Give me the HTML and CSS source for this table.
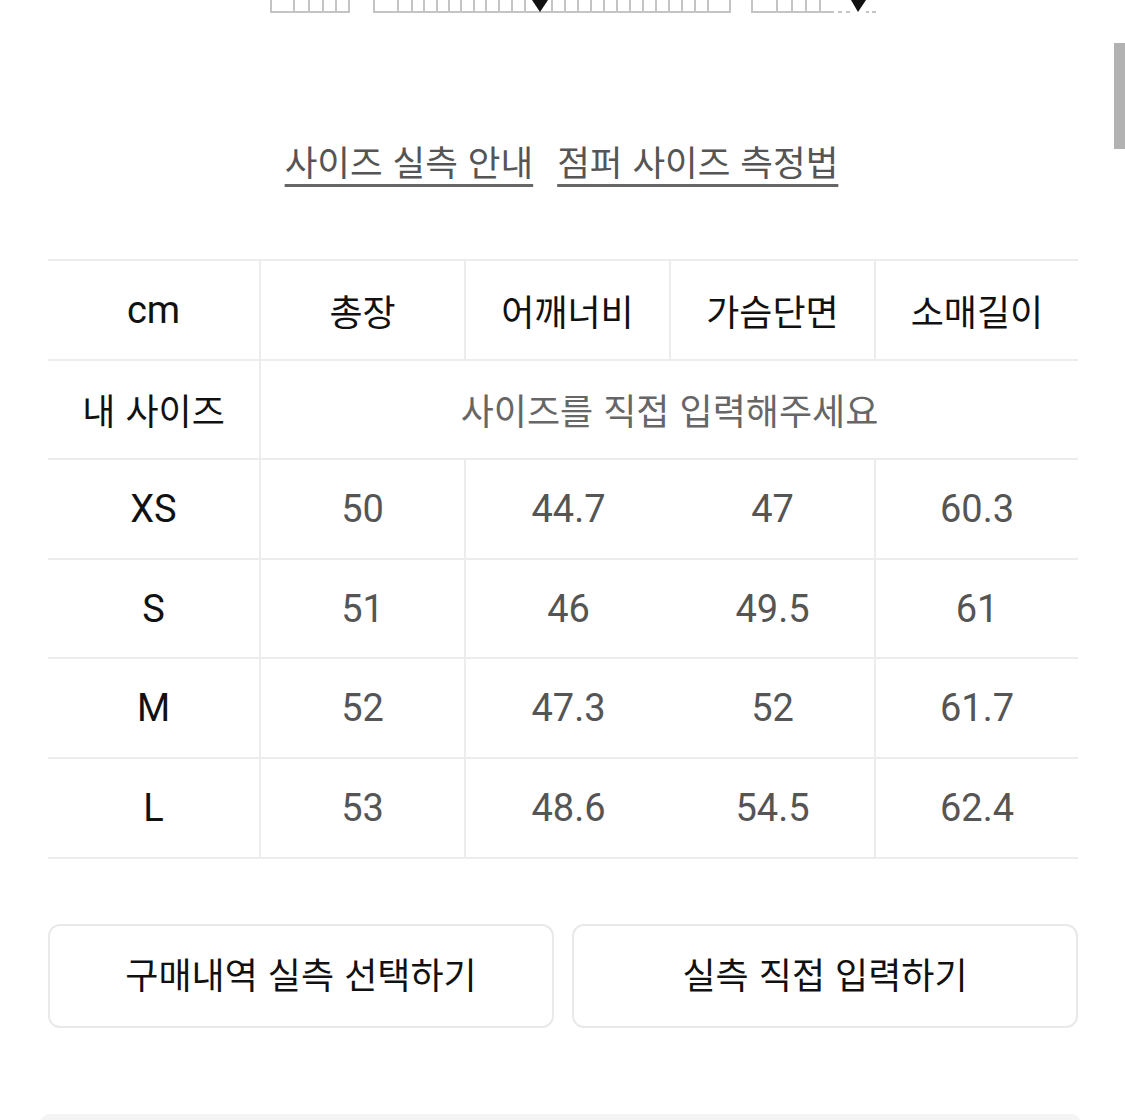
FILE: index.html
```html
<!DOCTYPE html>
<html lang="ko">
<head>
<meta charset="utf-8">
<link rel="stylesheet" href="styles.css">
</head>
<body>
<div class="page">
  <div class="ruler-strip">
    <svg width="1125" height="16" viewBox="0 0 1125 16">
      <g fill="none" stroke="#c4c4c4" stroke-width="2">
        <path d="M271 0 V12 H349 V0"/>
        <path d="M294 0 V12 M309 0 V12 M323 0 V12 M336 0 V12"/>
        <path d="M374 0 V12 H730 V0"/>
        <path d="M398 0 V12 M412 0 V12 M424 0 V12 M437 0 V12 M449 0 V12 M461 0 V12 M474 0 V12 M486 0 V12 M499 0 V12 M512 0 V12 M525 0 V12 M552 0 V12 M565 0 V12 M578 0 V12 M591 0 V12 M604 0 V12 M617 0 V12 M630 0 V12 M643 0 V12 M656 0 V12 M669 0 V12 M682 0 V12 M695 0 V12 M708 0 V12"/>
        <path d="M752 0 V12 H834 M777 0 V12 M792 0 V12 M806 0 V12 M820 0 V12"/>
        <path d="M838 12 H842 M846 12 H850 M866 12 H869 M872 12 H876" stroke-width="2"/>
      </g>
      <path d="M532 0 H548 L540 12 Z" fill="#111"/>
      <path d="M851 0 H866 L858 12 Z" fill="#111"/>
    </svg>
  </div>

  <div class="guide-links">
    <a class="guide-link" href="#">사이즈 실측 안내</a>
    <a class="guide-link" href="#">점퍼 사이즈 측정법</a>
  </div>

  <div class="size-table">
    <div class="cell head first latin">cm</div>
    <div class="cell head">총장</div>
    <div class="cell head">어깨너비</div>
    <div class="cell head">가슴단면</div>
    <div class="cell head">소매길이</div>

    <div class="cell head first">내 사이즈</div>
    <div class="cell input-cell">사이즈를 직접 입력해주세요</div>

    <div class="cell head first latin">XS</div>
    <div class="cell val">50</div>
    <div class="cell val">44.7</div>
    <div class="cell val">47</div>
    <div class="cell val">60.3</div>

    <div class="cell head first latin">S</div>
    <div class="cell val">51</div>
    <div class="cell val">46</div>
    <div class="cell val">49.5</div>
    <div class="cell val">61</div>

    <div class="cell head first latin">M</div>
    <div class="cell val">52</div>
    <div class="cell val">47.3</div>
    <div class="cell val">52</div>
    <div class="cell val">61.7</div>

    <div class="cell head first latin">L</div>
    <div class="cell val">53</div>
    <div class="cell val">48.6</div>
    <div class="cell val">54.5</div>
    <div class="cell val">62.4</div>
  </div>

  <div class="actions">
    <button class="action-btn">구매내역 실측 선택하기</button>
    <button class="action-btn">실측 직접 입력하기</button>
  </div>

  <div class="bottom-sheet"></div>
</div>
<div class="scroll-thumb"></div>
</body>
</html>
```

FILE: styles.css
```css
html, body {
  margin: 0;
  padding: 0;
  background: #ffffff;
  height: 1120px;
  overflow: hidden;
}
body {
  font-family: Roboto, "Noto Sans CJK KR", sans-serif;
  color: #111;
}
.page {
  width: 1125px;
}
.ruler-strip {
  height: 16px;
  line-height: 0;
}
.ruler-strip svg {
  display: block;
}
.guide-links {
  display: flex;
  justify-content: center;
  gap: 24px;
  padding-top: 118px;
  padding-right: 2px;
  height: 58px;
  box-sizing: content-box;
}
.guide-link {
  font-family: "Noto Sans CJK KR", sans-serif;
  font-size: 35.5px;
  line-height: 54px;
  color: #555;
  text-decoration: underline;
  text-decoration-thickness: 3px;
  text-underline-offset: 8px;
  text-decoration-color: #666;
}
.size-table {
  margin: 67px 47px 0 48px;
  display: grid;
  grid-template-columns: 213px 205px 205px 205px 1fr;
  grid-auto-rows: 99.6px;
  border-top: 2px solid #ececec;
}
.cell {
  display: flex;
  align-items: center;
  justify-content: center;
  border-bottom: 2px solid #ececec;
  border-right: 2px solid #ececec;
  box-sizing: border-box;
}
.cell:nth-child(5n) {
  border-right: none;
}
.size-table .cell:nth-child(7) ~ .cell:nth-child(5n+2) {
  border-right: none;
}
.head {
  font-family: "Noto Sans CJK KR", sans-serif;
  color: #111;
  font-size: 36px;
}
.head.latin {
  font-family: Roboto, sans-serif;
  font-size: 38px;
}
.val {
  font-family: Roboto, sans-serif;
  color: #555;
  font-size: 38px;
}
.input-cell {
  grid-column: 2 / span 4;
  border-right: none;
  color: #666;
  font-family: "Noto Sans CJK KR", sans-serif;
  font-size: 36px;
}
.actions {
  margin: 65px 47px 0 48px;
  display: grid;
  grid-template-columns: 1fr 1fr;
  gap: 18px;
}
.action-btn {
  height: 104px;
  background: #fff;
  border: 2px solid #e9e9e9;
  border-radius: 12px;
  font-family: "Noto Sans CJK KR", sans-serif;
  font-size: 36px;
  color: #111;
  padding: 0 0 6px;
}
.bottom-sheet {
  margin: 86px 44px 0 40px;
  height: 30px;
  background: #f4f4f4;
  border-radius: 10px 10px 0 0;
}
.scroll-thumb {
  position: fixed;
  right: 0;
  top: 43px;
  width: 11px;
  height: 106px;
  background: #b2b2b2;
}
```
